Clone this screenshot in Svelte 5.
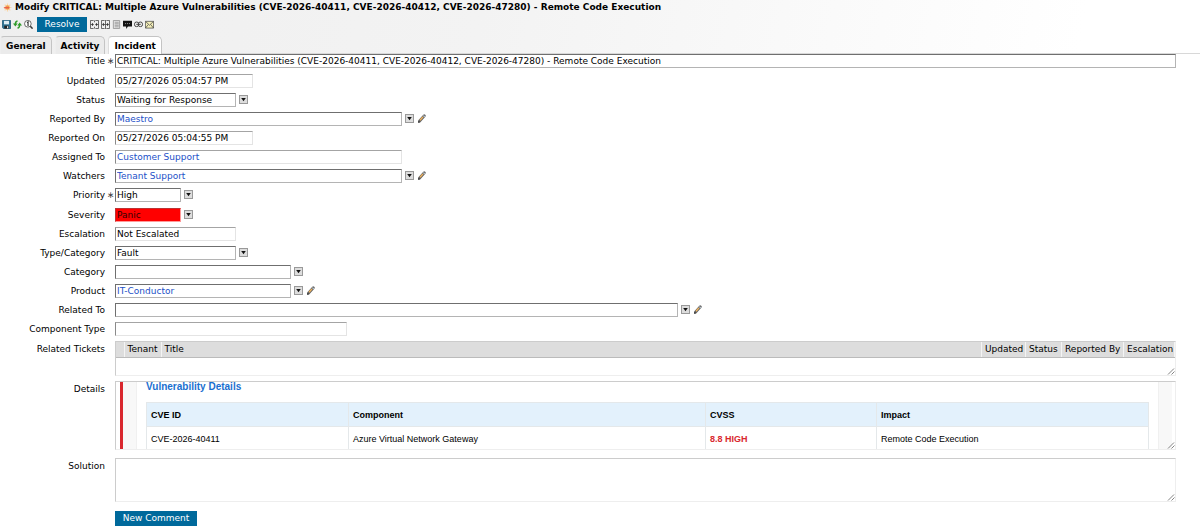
<script lang="ts">
  interface Field {
    id: string;
    label: string;
    value: string;
    size: string;
    required?: boolean;
    readonly?: boolean;
    link?: boolean;
    alert?: boolean;
    picker?: boolean;
    edit?: boolean;
  }

  const subject =
    'CRITICAL: Multiple Azure Vulnerabilities (CVE-2026-40411, CVE-2026-40412, CVE-2026-47280) - Remote Code Execution';

  const tabs = ['General', 'Activity', 'Incident'];
  let activeTab = $state('Incident');

  let groups: Field[][] = $state([
    [{ id: 'title', label: 'Title', value: subject, size: 'full', required: true }],
    [
      { id: 'updated', label: 'Updated', value: '05/27/2026 05:04:57 PM', size: 'date', readonly: true },
      { id: 'status', label: 'Status', value: 'Waiting for Response', size: 'sm', picker: true },
      { id: 'reported-by', label: 'Reported By', value: 'Maestro', size: 'xl', link: true, picker: true, edit: true },
      { id: 'reported-on', label: 'Reported On', value: '05/27/2026 05:04:55 PM', size: 'date', readonly: true },
      { id: 'assigned-to', label: 'Assigned To', value: 'Customer Support', size: 'xl', link: true, readonly: true },
      { id: 'watchers', label: 'Watchers', value: 'Tenant Support', size: 'xl', link: true, picker: true, edit: true },
      { id: 'priority', label: 'Priority', value: 'High', size: 'xs', required: true, picker: true }
    ],
    [
      { id: 'severity', label: 'Severity', value: 'Panic', size: 'xs', alert: true, picker: true },
      { id: 'escalation', label: 'Escalation', value: 'Not Escalated', size: 'sm', readonly: true },
      { id: 'type', label: 'Type/Category', value: 'Fault', size: 'sm', picker: true },
      { id: 'category', label: 'Category', value: '', size: 'md', picker: true },
      { id: 'product', label: 'Product', value: 'IT-Conductor', size: 'md', link: true, picker: true, edit: true },
      { id: 'related-to', label: 'Related To', value: '', size: 'xxl', picker: true, edit: true },
      { id: 'component-type', label: 'Component Type', value: '', size: 'lg', readonly: true }
    ]
  ]);

  const ticketColumns = [
    { name: '', cls: 'mark' },
    { name: 'Tenant', cls: 'tenant' },
    { name: 'Title', cls: 'subject' },
    { name: 'Updated', cls: 'updated' },
    { name: 'Status', cls: 'status' },
    { name: 'Reported By', cls: 'reporter' },
    { name: 'Escalation', cls: 'escalation' }
  ];

  let solution = $state('');
</script>

{#snippet grip()}
  <svg class="grip" viewBox="0 0 8 8" aria-hidden="true">
    <path d="M1 7.5 7 1.5M4.5 7.5 7.5 4.5" stroke="#777" stroke-width="0.9" fill="none" />
  </svg>
{/snippet}

<div class="page">
  <header>
    <h1>
      <svg class="spark" viewBox="0 0 9 9" aria-hidden="true">
        <path d="M4.5 .5v8M.5 4.5h8M1.7 1.7l5.6 5.6M7.3 1.7 1.7 7.3" stroke="#fad7a8" stroke-width="1.2" />
        <circle cx="4.5" cy="4.5" r="2.2" fill="#f5a04a" />
        <path d="M1.2 4.7h5" stroke="#e8604a" stroke-width="1.5" />
      </svg>
      Modify {subject}
    </h1>

    <div class="toolbar">
      <button class="icon" aria-label="Save">
        <svg viewBox="0 0 10 10">
          <path d="M.5.5h9v9h-8l-1-1z" fill="#2f7596" stroke="#255f7d" />
          <path d="M2.2 1h5.6v3.8H2.2z" fill="#dcebf2" />
          <path d="M2.5 6.3h5v3.2h-5z" fill="#222" />
          <path d="M5.6 7h1.3v2.2H5.6z" fill="#eee" />
        </svg>
      </button>
      <button class="icon" aria-label="Refresh">
        <svg viewBox="0 0 10 10" fill="none" stroke="#2f9a2a" stroke-width="1.7">
          <path d="M5 1C3.2 1.3 2.6 2.5 2.6 5" />
          <path d="M0 4h5.2L2.6 7.2z" fill="#2f9a2a" stroke="none" />
          <path d="M5 9C6.8 8.7 7.4 7.5 7.4 5" />
          <path d="M4.8 6H10L7.4 2.8z" fill="#2f9a2a" stroke="none" />
        </svg>
      </button>
      <button class="icon" aria-label="Inspect">
        <svg viewBox="0 0 10 10" fill="none" stroke="#333">
          <circle cx="4.3" cy="4.2" r="3.7" stroke-width="0.8" fill="#fff" />
          <path d="M3.4 3l1.1-.8v4.4" stroke-width="1.3" />
          <path d="M7 7 9.5 9.6" stroke-width="1.6" />
        </svg>
      </button>
      <button class="primary resolve">Resolve</button>
      <button class="icon" aria-label="Collapse columns">
        <svg viewBox="0 0 10 10" fill="none" stroke="#555">
          <path d="M4 .5H.5v9H4M6 .5h3.5v9H6" />
          <path d="M5 .5v2M5 7.5v2M.5 5h3M6.5 5h3" />
          <path d="M2.2 3 4.2 5 2.2 7zM7.8 3 5.8 5l2 2z" fill="#333" stroke="none" />
        </svg>
      </button>
      <button class="icon" aria-label="Expand columns">
        <svg viewBox="0 0 10 10" fill="none" stroke="#555">
          <path d="M4 .5H.5v9H4M6 .5h3.5v9H6M5 0v10M2 5h6" />
          <path d="M3.2 3 1.2 5l2 2zM6.8 3 8.8 5l-2 2z" fill="#333" stroke="none" />
        </svg>
      </button>
      <button class="icon" aria-label="List">
        <svg viewBox="0 0 10 10" fill="none">
          <path d="M1.5.5h7v9h-7z" fill="#e4e4e4" stroke="#999" />
          <path d="M3 2.5h4.5M3 4.2h4.5M3 5.9h4.5M3 7.6h4.5" stroke="#888" stroke-width="0.8" />
        </svg>
      </button>
      <button class="icon" aria-label="Comment">
        <svg viewBox="0 0 10 10">
          <path d="M0 .8h10v6.4H5.5L3.5 10V7.2H0z" fill="#111" />
          <path d="M2.2 4h1.2M4.4 4h1.2M6.6 4h1.2" stroke="#999" />
        </svg>
      </button>
      <button class="icon" aria-label="Link">
        <svg viewBox="0 0 10 10" fill="none" stroke="#444" stroke-width="1.1">
          <rect x=".6" y="2.3" width="4.6" height="5" rx="2" />
          <rect x="4.8" y="2.3" width="4.6" height="5" rx="2" />
          <path d="M2.5 4.8h5" />
        </svg>
      </button>
      <button class="icon" aria-label="Mail">
        <svg viewBox="0 0 10 10" stroke="#444" stroke-width="0.8">
          <path d="M.5 1.5h9v7.5h-9z" fill="#f4efb8" />
          <path d="M.5 1.5 5 5.8 9.5 1.5M.5 9 3.7 5M9.5 9 6.3 5" fill="none" />
        </svg>
      </button>
    </div>

    <div class="tabs" role="tablist">
      {#each tabs as tab}
        <button role="tab" aria-selected={tab === activeTab} class:active={tab === activeTab} onclick={() => (activeTab = tab)}>
          {tab}
        </button>
      {/each}
      <span class="rule"></span>
    </div>
  </header>

  <form onsubmit={(e) => e.preventDefault()}>
    {#each groups as group}
      <div class="group">
        {#each group as field (field.id)}
          <div class="row">
            <label for={field.id}>{field.label}</label>
            <span class="required">{field.required ? '∗' : ''}</span>
            <input
              id={field.id}
              class={field.size}
              class:link={field.link}
              class:alert={field.alert}
              readonly={field.readonly}
              bind:value={field.value}
            />
            {#if field.picker}
              <button type="button" class="picker" aria-label="Choose {field.label}">
                <svg viewBox="0 0 7 7"><path d="M1.2 2h4.6L3.5 5.2z" fill="#111" /></svg>
              </button>
            {/if}
            {#if field.edit}
              <button type="button" class="edit" aria-label="Edit {field.label}">
                <svg viewBox="0 0 8 9">
                  <path d="M1.6 7 6.3 1.7" stroke="#666" stroke-width="2.8" stroke-linecap="round" />
                  <path d="M2 6.3 5 2.9" stroke="#f2b45c" stroke-width="1.4" />
                  <path d="M5.2 1.6 7 3" stroke="#b8c4cc" stroke-width="1.1" />
                  <path d="M0 8.9.5 6.8l1.6 1.5z" fill="#222" />
                </svg>
              </button>
            {/if}
          </div>
        {/each}
      </div>
    {/each}

    <div class="row area">
      <span class="label">Related Tickets</span>
      <div class="box tickets">
        <table>
          <thead>
            <tr>
              {#each ticketColumns as column}
                <th class={column.cls}>{column.name}</th>
              {/each}
            </tr>
          </thead>
        </table>
        {@render grip()}
      </div>
    </div>

    <div class="row area">
      <span class="label">Details</span>
      <div class="box details">
        <div class="mail">
          <div class="sheet">
            <h2>Vulnerability Details</h2>
            <table>
              <thead>
                <tr><th class="cve">CVE ID</th><th class="component">Component</th><th class="cvss">CVSS</th><th>Impact</th></tr>
              </thead>
              <tbody>
                <tr>
                  <td>CVE-2026-40411</td>
                  <td>Azure Virtual Network Gateway</td>
                  <td class="high">8.8 HIGH</td>
                  <td>Remote Code Execution</td>
                </tr>
              </tbody>
            </table>
          </div>
        </div>
        {@render grip()}
      </div>
    </div>

    <div class="row area last">
      <label for="solution">Solution</label>
      <div class="box solution">
        <textarea id="solution" bind:value={solution}></textarea>
        {@render grip()}
      </div>
    </div>

    <button type="button" class="primary comment">New Comment</button>
  </form>
</div>

<style>
  :global(body) {
    margin: 0;
    background: #fff;
  }

  .page {
    font-family: Verdana, 'DejaVu Sans', sans-serif;
    font-size: 9px;
    line-height: 12px;
    color: #000;
  }

  button,
  input,
  textarea {
    box-sizing: border-box;
    margin: 0;
    font: inherit;
    color: inherit;
  }

  button {
    padding: 0;
    border: 0;
    background: none;
    cursor: pointer;
  }

  svg {
    display: block;
    width: 100%;
    height: 100%;
  }

  header {
    background: linear-gradient(100deg, #efefef, #f3f3f3 40%, #fff 90%);
  }

  h1 {
    display: flex;
    align-items: center;
    gap: 3px;
    margin: 0;
    padding: 1px 0 0 3px;
    font-size: 9px;
    line-height: 13px;
    white-space: nowrap;
  }

  .spark {
    flex: none;
    width: 9px;
    height: 9px;
  }

  .toolbar {
    display: flex;
    align-items: center;
    gap: 2px;
    padding: 3px 0 4px 2px;
  }

  .icon {
    width: 9px;
    height: 9px;
  }

  .primary {
    background: #00699b;
    color: #fff;
    height: 15px;
    line-height: 15px;
  }

  .resolve {
    width: 50px;
    margin: 0 1px 0 2px;
  }

  .tabs {
    display: flex;
    align-items: flex-end;
    gap: 3px;
  }

  .tabs button {
    height: 18px;
    padding: 0 5px;
    border: 1px solid #c4c4c4;
    border-left-color: #eee;
    border-bottom: 0;
    border-radius: 4px 5px 0 0;
    background: #ebebeb;
    font-weight: bold;
  }

  .tabs button.active {
    background: #fff;
    border-left-color: #ddd;
  }

  .tabs .rule {
    flex: 1;
    height: 1px;
    margin-left: -3px;
    background: #d8d8d8;
  }

  form {
    padding-right: 24px;
  }

  .group {
    display: flex;
    flex-direction: column;
    gap: 5px;
    margin-bottom: 5px;
  }

  .group + .group {
    padding-top: 1px;
  }

  .row {
    display: flex;
    align-items: center;
  }

  label,
  .label {
    flex: none;
    width: 105px;
    text-align: right;
  }

  .required {
    width: 8px;
    margin-left: 2px;
    color: #444;
  }

  input {
    height: 14px;
    padding: 0 1px;
    border: 1px solid;
    border-color: #6f6f6f #b4b4b4 #b4b4b4 #6f6f6f;
    border-radius: 0;
    background: #fff;
    outline: 0;
  }

  input[readonly] {
    border-color: #a4a4a4 #e4e4e4 #e4e4e4 #8a8a8a;
  }

  input.link {
    color: #1c50c8;
  }

  input.alert {
    background: #f00;
    border-color: #b33 #f99 #f99 #b33;
    color: #300;
  }

  .xs {
    width: 66px;
  }

  .sm {
    width: 121px;
  }

  .date {
    width: 138px;
  }

  .md {
    width: 176px;
  }

  .lg {
    width: 232px;
  }

  .xl {
    width: 287px;
  }

  .xxl {
    width: 563px;
  }

  .full {
    flex: 1;
  }

  .picker,
  .edit {
    height: 9px;
    margin-bottom: 2px;
  }

  .picker {
    width: 9px;
    margin-left: 3px;
    border: 1px solid #999;
    background: #ddd;
  }

  .edit {
    width: 8px;
    margin-left: 4px;
  }

  .area {
    align-items: flex-start;
    gap: 10px;
    margin-bottom: 5px;
  }

  .area.last {
    margin: 8px 0 9px;
  }

  .area label,
  .area .label {
    padding-top: 2px;
  }

  .box {
    position: relative;
    flex: 1;
    box-sizing: border-box;
    min-width: 0;
    border: 1px solid;
    border-color: #ccc #eee #eee #ccc;
    overflow: hidden;
  }

  .grip {
    position: absolute;
    right: 0;
    bottom: 0;
    width: 8px;
    height: 8px;
  }

  table {
    width: 100%;
    border-collapse: collapse;
    table-layout: fixed;
  }

  th,
  td {
    box-sizing: border-box;
    font-size: 9px;
    text-align: left;
    white-space: nowrap;
  }

  .tickets {
    height: 35px;
  }

  .tickets th {
    height: 15px;
    padding: 0 0 0 3px;
    border-right: 1px solid #f4f4f4;
    border-bottom: 1px solid #bbb;
    background: #ddd;
    font-weight: normal;
  }

  .mark {
    width: 8px;
  }

  .tenant {
    width: 37px;
  }

  .updated {
    width: 44px;
  }

  .status {
    width: 36px;
  }

  .reporter {
    width: 62px;
  }

  .escalation {
    width: 51px;
  }

  .details {
    height: 69px;
    padding: 0 3px 0 4px;
    font-family: Arial, 'Liberation Sans', sans-serif;
  }

  .mail {
    padding: 0 13px;
    border-left: 3px solid #d9272e;
    background: #f8f8f8;
  }

  .sheet {
    padding: 0 9px;
    border: 1px solid #f0f0f0;
    border-top: 0;
    background: #fff;
  }

  h2 {
    margin: 0 0 10px;
    font-size: 10px;
    line-height: 10px;
    color: #1a6fd0;
  }

  .details th,
  .details td {
    height: 24px;
    padding: 0 4px;
    border: 1px solid #e4e8ea;
  }

  .details th {
    background: #e3f1fc;
  }

  .details .cve {
    width: 202px;
  }

  .details .component {
    width: 357px;
  }

  .details .cvss {
    width: 171px;
  }

  .details .high {
    color: #d9272e;
    font-weight: bold;
  }

  .solution {
    height: 44px;
  }

  textarea {
    display: block;
    width: 100%;
    height: 100%;
    padding: 2px;
    border: 0;
    outline: 0;
    resize: none;
  }

  .comment {
    width: 82px;
    margin-left: 115px;
  }
</style>
